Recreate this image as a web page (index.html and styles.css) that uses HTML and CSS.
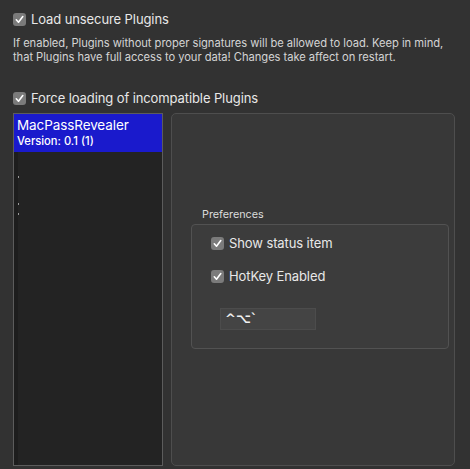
FILE: index.html
```html
<!DOCTYPE html>
<html>
<head>
<meta charset="utf-8">
<link rel="stylesheet" href="styles.css">
</head>
<body>
<div class="page">
  <label class="check-row row-load">
    <span class="box"><svg viewBox="0 0 13 13" width="13" height="13"><path d="M3.3 6.8 L5.5 9.2 L9.8 3.6" fill="none" stroke="#fff" stroke-width="1.6" stroke-linecap="round" stroke-linejoin="round"/></svg></span>
    <span class="label">Load unsecure Plugins</span>
  </label>
  <p class="desc">If enabled, Plugins without proper signatures will be allowed to load. Keep in mind, that Plugins have full access to your data! Changes take affect on restart.</p>
  <label class="check-row row-force">
    <span class="box"><svg viewBox="0 0 13 13" width="13" height="13"><path d="M3.3 6.8 L5.5 9.2 L9.8 3.6" fill="none" stroke="#fff" stroke-width="1.6" stroke-linecap="round" stroke-linejoin="round"/></svg></span>
    <span class="label">Force loading of incompatible Plugins</span>
  </label>
  <div class="main">
    <div class="list">
      <div class="item selected">
        <div class="name">MacPassRevealer</div>
        <div class="version">Version: 0.1 (1)</div>
      </div>
      <div class="list-body">
        <span class="tick t1"></span>
        <span class="tick t2"></span>
        <span class="tick t3"></span>
      </div>
    </div>
    <div class="panel">
      <div class="prefs-title">Preferences</div>
      <div class="prefs">
        <label class="check-row pref-row">
          <span class="box"><svg viewBox="0 0 13 13" width="13" height="13"><path d="M3.3 6.8 L5.5 9.2 L9.8 3.6" fill="none" stroke="#fff" stroke-width="1.6" stroke-linecap="round" stroke-linejoin="round"/></svg></span>
          <span class="label">Show status item</span>
        </label>
        <label class="check-row pref-row">
          <span class="box"><svg viewBox="0 0 13 13" width="13" height="13"><path d="M3.3 6.8 L5.5 9.2 L9.8 3.6" fill="none" stroke="#fff" stroke-width="1.6" stroke-linecap="round" stroke-linejoin="round"/></svg></span>
          <span class="label">HotKey Enabled</span>
        </label>
        <div class="hotkey">^⌥`</div>
      </div>
    </div>
  </div>
</div>
</body>
</html>
```
FILE: styles.css
```css
html, body {
  margin: 0;
  padding: 0;
  background: #323232;
  height: 469px;
  overflow: hidden;
}
body {
  font-family: "Inter", "Liberation Sans", sans-serif;
  color: #e6e6e6;
}
.page {
  padding: 13px 13px 0 13px;
  display: flex;
  flex-direction: column;
}
.check-row {
  display: flex;
  align-items: center;
  gap: 5px;
  height: 13px;
}
.box {
  width: 13px;
  height: 13px;
  border-radius: 3px;
  background: #7b7b7b;
  display: block;
  flex: none;
}
.box svg { display: block; }
.label {
  font-size: 13px;
  line-height: 13px;
  color: #e8e8e8;
  letter-spacing: -0.1px;
}
.desc {
  margin: 10px 0 0 0;
  font-size: 11.2px;
  line-height: 14px;
  color: #d4d4d4;
  width: 436px;
  letter-spacing: -0.05px;
}
.row-force { margin-top: 28px; }
.main {
  margin-top: 8px;
  display: flex;
  gap: 8px;
  height: 353px;
}
.list {
  width: 148px;
  border: 1px solid #5c5c5c;
  background: #232323;
  display: flex;
  flex-direction: column;
}
.item.selected {
  background: #1a1acc;
  height: 38px;
  padding: 3px 0 0 3px;
  box-sizing: border-box;
}
.name {
  font-size: 13.5px;
  line-height: 17px;
  color: #fff;
  letter-spacing: -0.1px;
}
.version {
  font-size: 11.2px;
  line-height: 15px;
  color: #fff;
  font-weight: 500;
}
.list-body {
  flex: 1;
  border-left: 4px solid #1d1d1d;
  position: relative;
}
.tick {
  position: absolute;
  left: 0;
  width: 1px;
  height: 2px;
  background: #9a9a9a;
}
.t1 { top: 24px; }
.t2 { top: 51px; }
.t3 { top: 61px; }
.panel {
  width: 284px;
  border: 1px solid #4e4e4e;
  border-radius: 5px;
  background: #383838;
  box-sizing: border-box;
  padding: 95px 8px 0 19px;
}
.prefs-title {
  font-size: 10.8px;
  line-height: 12px;
  color: #dcdcdc;
  padding-left: 11px;
  margin-bottom: 3px;
}
.prefs {
  width: 258px;
  height: 125px;
  box-sizing: border-box;
  border: 1px solid #525252;
  border-radius: 4px;
  background: #3c3c3c;
  padding: 12px 0 0 19px;
  display: flex;
  flex-direction: column;
}
.pref-row + .pref-row { margin-top: 20px; }
.hotkey {
  margin: 25px 0 0 9px;
  width: 96px;
  height: 22px;
  box-sizing: border-box;
  border: 1px solid #4c4c4c;
  background: #444444;
  color: #f0f0f0;
  font-size: 13px;
  line-height: 20px;
  padding-left: 4px;
  font-weight: 600;
  font-family: "DejaVu Sans", sans-serif;
}
```
